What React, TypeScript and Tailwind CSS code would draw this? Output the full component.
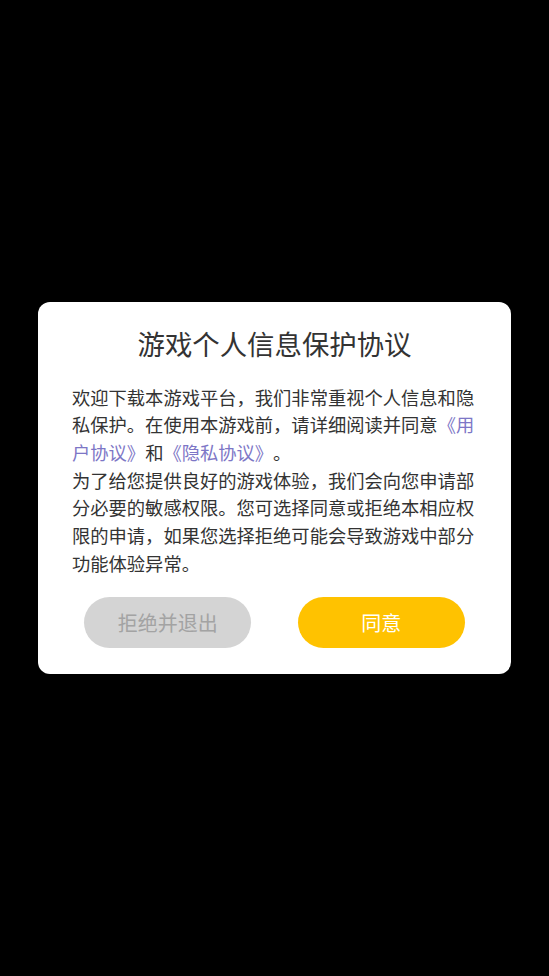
export default function App() {
  return (
    <div
      className="min-h-[976px] w-full bg-black flex items-center justify-center [text-spacing-trim:space-all]"
      style={{ fontFamily: '"Noto Sans CJK SC", "Noto Sans", sans-serif' }}
    >
      <div className="w-[473px] bg-white rounded-[12px] pt-[21px] pb-[26px]">
        <h1 className="text-center text-[27.4px] leading-[40px] text-[#333333] font-normal">
          游戏个人信息保护协议
        </h1>
        <div className="px-[34px] mt-[21px] text-[18.3px] leading-[27.7px] text-[#333333]">
          <p>
            欢迎下载本游戏平台，我们非常重视个人信息和隐私保护。在使用本游戏前，请详细阅读并同意
            <span className="text-[#7d76c6]">《用户协议》</span>和
            <span className="text-[#7d76c6]">《隐私协议》</span>。
          </p>
          <p>
            为了给您提供良好的游戏体验，我们会向您申请部分必要的敏感权限。您可选择同意或拒绝本相应权限的申请，如果您选择拒绝可能会导致游戏中部分功能体验异常。
          </p>
        </div>
        <div className="flex justify-evenly mt-[20px]">
          <button className="w-[167px] h-[51px] rounded-full bg-[#d4d4d4] text-[#a3a3a3] text-[20px]">
            拒绝并退出
          </button>
          <button className="w-[167px] h-[51px] rounded-full bg-[#ffc200] text-white text-[20px]">
            同意
          </button>
        </div>
      </div>
    </div>
  );
}
